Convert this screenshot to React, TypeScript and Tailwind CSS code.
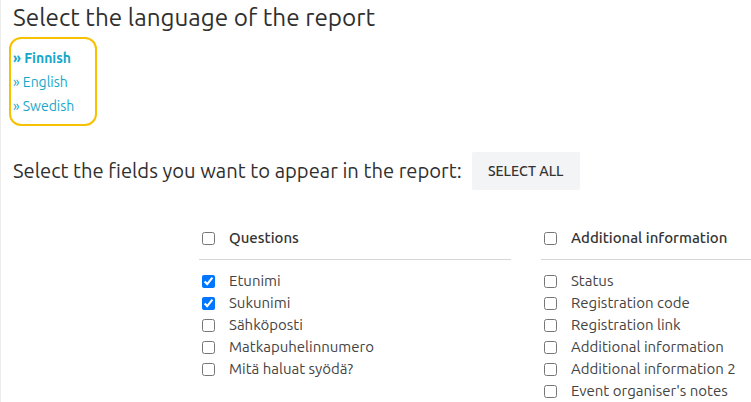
import React from 'react';

const questions = [
  { label: 'Etunimi', checked: true },
  { label: 'Sukunimi', checked: true },
  { label: 'Sähköposti', checked: false },
  { label: 'Matkapuhelinnumero', checked: false },
  { label: 'Mitä haluat syödä?', checked: false },
];

const additional = [
  'Status',
  'Registration code',
  'Registration link',
  'Additional information',
  'Additional information 2',
  "Event organiser's notes",
];

function FieldRow({ label, checked }: { label: string; checked?: boolean }) {
  return (
    <label className="flex items-center h-[22px] text-[15px] text-[#444]">
      <input
        type="checkbox"
        defaultChecked={checked}
        className="m-0 ml-[3px] mr-[14px] w-[13px] h-[13px] shrink-0"
      />
      {label}
    </label>
  );
}

function Column({ title, children }: { title: string; children: React.ReactNode }) {
  return (
    <div className="w-[312px] shrink-0">
      <label className="flex items-center h-[24px] text-[15px] font-medium text-[#333] border-b border-[#d6d6d6] box-content pb-[9px]">
        <input type="checkbox" className="m-0 ml-[3px] mr-[14px] w-[13px] h-[13px] shrink-0" />
        {title}
      </label>
      <div className="pt-[10px]">{children}</div>
    </div>
  );
}

export default function App() {
  const font = { fontFamily: '"Ubuntu", "Noto Sans", "Open Sans", sans-serif' };
  return (
    <div className="min-h-[402px] bg-white border-l border-[#ececec] pl-[12px] overflow-hidden" style={font}>
      <h1 className="text-[24.3px] leading-[34px] text-[#2f2f2f]">
        Select the language of the report
      </h1>

      {/* Language links */}
      <div className="mt-[3px] -ml-[4px] w-[88px] h-[89px] border-2 border-[#f7c100] rounded-[12px] pt-[7px] pl-[2px] flex flex-col">
        <a className="text-[14px] leading-[24px] font-bold text-[#16a7c9]">» Finnish</a>
        <a className="text-[14px] leading-[24px] text-[#16a7c9]">» English</a>
        <a className="text-[14px] leading-[24px] text-[#16a7c9]">» Swedish</a>
      </div>

      {/* Fields */}
      <div className="mt-[26px] flex items-center gap-[10px]">
        <span className="text-[20.2px] text-[#2f2f2f]">Select the fields you want to appear in the report:</span>
        <button className="h-[38px] w-[108px] bg-[#f3f4f6] rounded-[2px] text-[14px] font-medium text-[#333] uppercase">
          Select all
        </button>
      </div>

      <div className="mt-[36px] ml-[186px] flex gap-[30px]">
        <Column title="Questions">
          {questions.map((q) => (
            <FieldRow key={q.label} label={q.label} checked={q.checked} />
          ))}
        </Column>
        <Column title="Additional information">
          {additional.map((a) => (
            <FieldRow key={a} label={a} />
          ))}
        </Column>
      </div>
    </div>
  );
}
